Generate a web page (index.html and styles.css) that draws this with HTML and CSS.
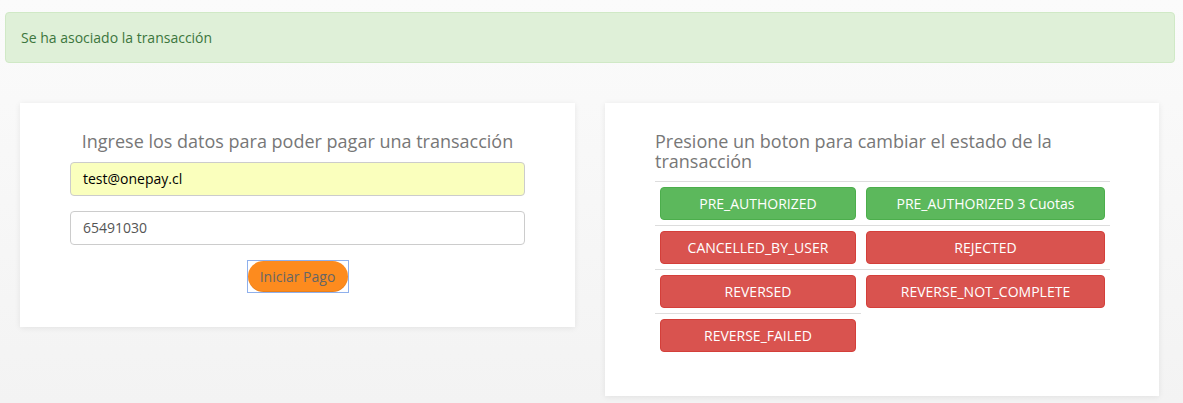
FILE: index.html
```html
<!DOCTYPE html>
<html lang="es">
<head>
<meta charset="utf-8">
<title>Onepay</title>
<link rel="stylesheet" href="styles.css">
</head>
<body>
<div class="page">
  <div class="alert">Se ha asociado la transacción</div>
  <div class="cards">
    <div class="card card-left">
      <h3 class="title center">Ingrese los datos para poder pagar una transacción</h3>
      <div class="field"><div class="input autofill">test@onepay.cl</div></div>
      <div class="field"><div class="input">65491030</div></div>
      <div class="actions"><span class="focus-ring"><button class="pay">Iniciar Pago</button></span></div>
    </div>
    <div class="card card-right">
      <h3 class="title narrow">Presione un boton para cambiar el estado de la transacción</h3>
      <div class="states">
        <div class="cell"><button class="btn ok">PRE_AUTHORIZED</button></div>
        <div class="cell"><button class="btn ok">PRE_AUTHORIZED 3 Cuotas</button></div>
        <div class="cell"><button class="btn bad">CANCELLED_BY_USER</button></div>
        <div class="cell"><button class="btn bad">REJECTED</button></div>
        <div class="cell"><button class="btn bad">REVERSED</button></div>
        <div class="cell"><button class="btn bad">REVERSE_NOT_COMPLETE</button></div>
        <div class="cell"><button class="btn bad">REVERSE_FAILED</button></div>
      </div>
    </div>
  </div>
</div>
</body>
</html>
```

FILE: styles.css
```css
html, body {
  margin: 0;
  height: 100%;
}
body {
  font-family: "Open Sans", "Liberation Sans", sans-serif;
  font-size: 14px;
  line-height: 20px;
  color: #555;
  background: linear-gradient(#fbfbfb, #f3f3f3);
  overflow: hidden;
}
.page {
  padding: 12px 8px 0 5px;
}
.alert {
  box-sizing: border-box;
  height: 51px;
  padding: 15px 15px;
  background: #dff0d8;
  border: 1px solid #d0e9c6;
  border-radius: 4px;
  color: #3c763d;
  font-size: 14px;
  line-height: 20px;
}
.cards {
  display: grid;
  grid-template-columns: 555px 554px;
  column-gap: 30px;
  padding: 0 15px;
  margin-top: 40px;
  align-items: start;
}
.card {
  background: #fff;
  box-shadow: 0 1px 6px rgba(0, 0, 0, 0.08);
  padding: 28px 50px 34px;
}
.card-right {
  padding-bottom: 39px;
}
.title {
  margin: 0 0 11px;
  font-size: 18px;
  line-height: 20px;
  font-weight: 400;
  color: #777;
}
.center {
  text-align: center;
}
.narrow {
  width: 420px;
  margin-bottom: 10px;
}
.field {
  margin-bottom: 15px;
}
.input {
  box-sizing: border-box;
  height: 34px;
  padding: 6px 12px;
  border: 1px solid #ccc;
  border-radius: 4px;
  background: #fff;
  color: #555;
  font-size: 14px;
  line-height: 20px;
}
.autofill {
  background: #faffbd;
  color: #000;
}
.actions {
  display: flex;
  justify-content: center;
  margin-top: 1px;
}
.focus-ring {
  display: inline-flex;
  border: 1px solid #8fb0ec;
  padding: 0;
}
.pay {
  font-family: inherit;
  font-size: 14px;
  line-height: 20px;
  width: 100px;
  height: 31px;
  padding: 0;
  border: 0;
  border-radius: 16px;
  background: #fd8b1e;
  color: #666;
  box-shadow: inset 0 -1px 0 rgba(0, 0, 0, 0.08);
}
.states {
  display: grid;
  grid-template-columns: 206px 249px;
  width: 455px;
}
.cell {
  border-top: 1px solid #ddd;
  padding: 5px;
}
.btn {
  display: block;
  width: 100%;
  box-sizing: border-box;
  height: 33px;
  padding: 0 12px;
  font-family: inherit;
  font-size: 14px;
  line-height: 20px;
  color: #fff;
  border: 1px solid transparent;
  border-radius: 4px;
  text-align: center;
}
.ok {
  background: #5cb85c;
  border-color: #4cae4c;
}
.bad {
  background: #d9534f;
  border-color: #d43f3a;
}
```
